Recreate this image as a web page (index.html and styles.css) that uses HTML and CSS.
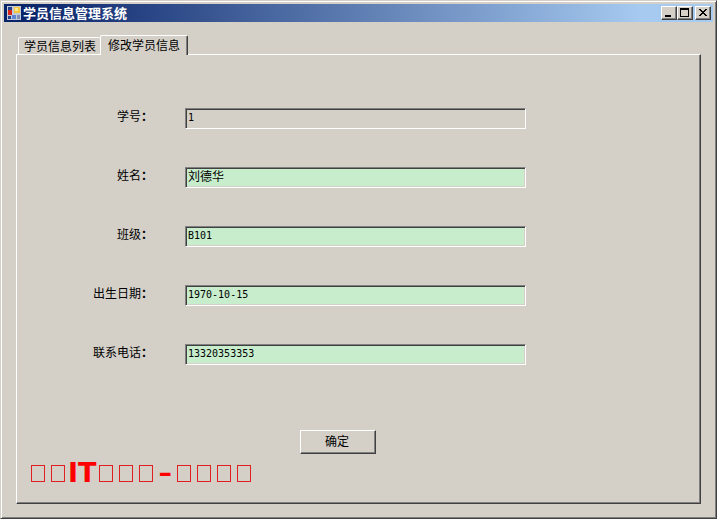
FILE: index.html
```html
<!DOCTYPE html>
<html lang="zh-CN">

<head>
  <meta charset="UTF-8">
  <title>学员信息管理系统</title>
  <link rel="stylesheet" href="styles.css">
</head>

<body>

  <div class="window">
    <header class="title-bar">
      <svg class="app-icon" width="16" height="16" viewBox="0 0 16 16" shape-rendering="crispEdges">
        <path d="M1 1h6v14H1z" fill="#c4cad8"/>
        <path d="M7 1h8v8H7zM6 9h9v6H6z" fill="#c4cad8"/>
        <rect x="2" y="2" width="4" height="3" fill="#24418c"/>
        <rect x="2" y="5" width="4" height="5" fill="#d8281c"/>
        <rect x="2" y="11" width="3" height="3" fill="#24418c"/>
        <rect x="8" y="2" width="6" height="6" fill="#f4c63c"/>
        <rect x="9" y="3" width="3" height="3" fill="#fbe694"/>
        <rect x="6" y="10" width="4" height="4" fill="#5c86d4"/>
        <rect x="11" y="10" width="3" height="4" fill="#7c90b8"/>
      </svg>
      <h1>学员信息管理系统</h1>
      <div class="window-buttons">
        <button type="button" aria-label="最小化">
          <svg width="12" height="10" viewBox="0 0 12 10" shape-rendering="crispEdges"><path d="M2 7h6v2H2z"/></svg>
        </button>
        <button type="button" aria-label="最大化">
          <svg width="12" height="10" viewBox="0 0 12 10" shape-rendering="crispEdges"><path fill-rule="evenodd" d="M1 0h9v9H1zM2 2v6h7V2z"/></svg>
        </button>
        <button type="button" class="close-btn" aria-label="关闭">
          <svg width="12" height="10" viewBox="0 0 12 10" shape-rendering="crispEdges"><path d="M2 1h2v1h1v1h2V2h1V1h2v1H9v1H8v1H7v1h1v1h1v1h1v1H8V7H7V6H5v1H4v1H2V7h1V6h1V5h1V4H4V3H3V2H2z"/></svg>
        </button>
      </div>
    </header>

    <main class="content">
      <div class="tabs" role="tablist">
        <button type="button" class="tab" role="tab" aria-selected="false">学员信息列表</button>
        <button type="button" class="tab active" role="tab" aria-selected="true">修改学员信息</button>
      </div>

      <div class="panel" role="tabpanel">
        <form>
          <div class="row">
            <label for="number">学号<span class="colon">：</span></label>
            <input type="text" id="number" class="code" value="1" readonly>
          </div>
          <div class="row">
            <label for="name">姓名<span class="colon">：</span></label>
            <input type="text" id="name" value="刘德华">
          </div>
          <div class="row">
            <label for="class">班级<span class="colon">：</span></label>
            <input type="text" id="class" class="code" value="B101">
          </div>
          <div class="row">
            <label for="birthday">出生日期<span class="colon">：</span></label>
            <input type="text" id="birthday" class="code" value="1970-10-15">
          </div>
          <div class="row">
            <label for="phone">联系电话<span class="colon">：</span></label>
            <input type="text" id="phone" class="code" value="13320353353">
          </div>
          <button type="button" class="ok-btn">确定</button>
        </form>

        <p class="slogan"><i></i><i></i><b>IT</b><i></i><i></i><i></i><b class="dash">–</b><i></i><i></i><i></i><i></i></p>
      </div>
    </main>
  </div>

</body>

</html>
```

FILE: styles.css
```css
* {
  box-sizing: border-box;
}

body {
  margin: 0;
  background: #d4d0c8;
  color: #000;
  font-family: "Noto Sans CJK SC", sans-serif;
  font-size: 12px;
  line-height: 16px;
}

button,
input {
  font: inherit;
  color: inherit;
  border-radius: 0;
}

.window {
  display: flex;
  flex-direction: column;
  min-height: 100vh;
  padding: 2px;
  border: 1px solid;
  border-color: #d4d0c8 #404040 #404040 #d4d0c8;
  box-shadow: inset 1px 1px #fff, inset -1px -1px #808080;
}

/* title bar */
.title-bar {
  display: flex;
  align-items: center;
  height: 18px;
  margin: 1px;
  padding: 0 2px;
  background: linear-gradient(to right, #0a246a 3%, #a6caf0 90%);
}

.app-icon {
  flex: none;
}

h1 {
  flex: 1;
  margin: 0 0 0 1px;
  color: #fff;
  font-size: 13px;
  font-weight: bold;
  line-height: 18px;
}

.window-buttons {
  display: flex;
}

.window-buttons button {
  width: 16px;
  height: 14px;
  padding: 1px;
  border: 1px solid;
  border-color: #fff #404040 #404040 #fff;
  background: #d4d0c8;
  box-shadow: inset -1px -1px #808080;
}

.window-buttons svg {
  display: block;
}

.window-buttons .close-btn {
  margin-left: 2px;
}

/* tabs */
.content {
  flex: 1;
  display: flex;
  flex-direction: column;
  padding: 12px 13px;
}

.tabs {
  display: flex;
  align-items: flex-end;
  padding-left: 2px;
}

.tab {
  height: 17px;
  padding: 0 4px 0 5px;
  border: 1px solid #fff;
  border-width: 1px 0 0 1px;
  border-radius: 2px 2px 0 0;
  background: #d4d0c8;
  line-height: 16px;
  white-space: nowrap;
}

.tab.active {
  z-index: 1;
  height: 20px;
  margin-bottom: -1px;
  padding: 0 7px 2px;
  border-left: 1px solid #fff;
  border-right: 1px solid #404040;
  box-shadow: inset -1px 0 #808080;
}

.panel {
  flex: 1;
  display: flex;
  flex-direction: column;
  border: 1px solid;
  border-color: #fff #404040 #404040 #fff;
  box-shadow: inset -1px -1px #808080;
}

/* form */
form {
  padding: 53px 174px 0 0;
}

.row {
  display: grid;
  grid-template-columns: 136px 1fr;
  column-gap: 32px;
  margin-bottom: 38px;
}

label {
  text-align: right;
}

.colon {
  font-family: "Noto Sans CJK TC", sans-serif;
  font-weight: bold;
}

input {
  width: 100%;
  height: 21px;
  padding: 0 2px 4px;
  border: 1px solid;
  border-color: #808080 #fff #fff #808080;
  background: #c7edcc;
  box-shadow: inset 1px 1px #404040, inset -1px -1px #d4d0c8;
  outline: none;
}

input:read-only {
  background: #d4d0c8;
}

.code {
  padding-bottom: 3px;
  font-family: "DejaVu Sans Mono", monospace;
  font-size: 10px;
}

.ok-btn {
  display: block;
  width: 76px;
  height: 24px;
  margin: 65px 0 0 283px;
  padding: 0 2px 2px 0;
  border: 1px solid;
  border-color: #fff #404040 #404040 #fff;
  background: #d4d0c8;
  box-shadow: inset -1px -1px #808080;
}

/* slogan, the blank boxes are 20px wide cells */
.slogan {
  margin: auto 0 15px 11px;
  color: #f00;
  font-family: "DejaVu Sans", sans-serif;
  font-size: 27px;
  line-height: 30px;
  white-space: nowrap;
}

.slogan i {
  display: inline-block;
  width: 14px;
  height: 17px;
  margin: 0 3px;
  border: 1px solid #e02020;
}

.dash {
  padding: 0 2px;
}
```
